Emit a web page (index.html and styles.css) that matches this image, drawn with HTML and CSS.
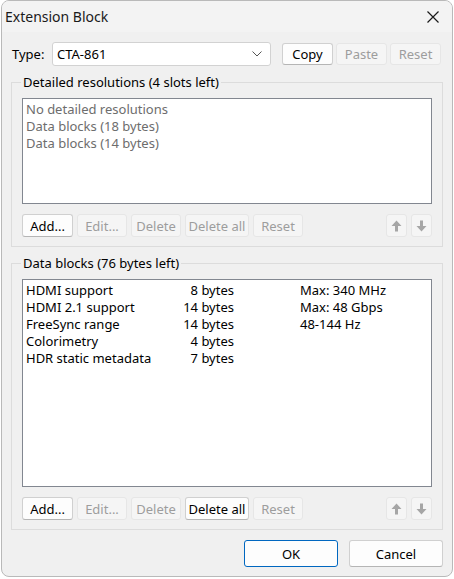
FILE: index.html
```html
<!DOCTYPE html>
<html>
<head>
<meta charset="utf-8">
<link rel="stylesheet" href="styles.css">
</head>
<body>
<div class="window">
  <div class="titlebar">
    <span class="title">Extension Block</span>
    <svg class="close" width="14" height="14" viewBox="0 0 14 14"><path d="M1.5 1.5 L12.5 12.5 M12.5 1.5 L1.5 12.5" stroke="#1a1a1a" stroke-width="1.2" fill="none"/></svg>
  </div>
  <div class="content">
    <div class="type-row">
      <span class="label">Type:</span>
      <div class="combo">
        <span>CTA-861</span>
        <svg width="10" height="6" viewBox="0 0 10 6"><path d="M0.5 0.5 L5 5 L9.5 0.5" stroke="#555" stroke-width="1" fill="none"/></svg>
      </div>
      <div class="btns-top">
        <button class="btn">Copy</button>
        <button class="btn dis">Paste</button>
        <button class="btn dis">Reset</button>
      </div>
    </div>

    <fieldset class="group g1">
      <legend>Detailed resolutions (4 slots left)</legend>
      <div class="listbox lb1 grayed">
        <div class="row">No detailed resolutions</div>
        <div class="row">Data blocks (18 bytes)</div>
        <div class="row">Data blocks (14 bytes)</div>
      </div>
      <div class="btnrow">
        <button class="btn w51">Add...</button>
        <button class="btn dis w50">Edit...</button>
        <button class="btn dis w50">Delete</button>
        <button class="btn dis w64">Delete all</button>
        <button class="btn dis w50">Reset</button>
        <span class="spacer"></span>
        <button class="btn dis arrow"><svg width="11" height="12" viewBox="0 0 11 12"><path d="M5.5 0.5 L10.5 6 L7 6 L7 11.5 L4 11.5 L4 6 L0.5 6 Z" fill="#a6a6a6"/></svg></button>
        <button class="btn dis arrow"><svg width="11" height="12" viewBox="0 0 11 12"><path d="M5.5 11.5 L10.5 6 L7 6 L7 0.5 L4 0.5 L4 6 L0.5 6 Z" fill="#a6a6a6"/></svg></button>
      </div>
    </fieldset>

    <fieldset class="group g2">
      <legend>Data blocks (76 bytes left)</legend>
      <div class="listbox lb2">
        <div class="drow"><span>HDMI support</span><span class="sz">8 bytes</span><span class="info">Max: 340 MHz</span></div>
        <div class="drow"><span>HDMI 2.1 support</span><span class="sz">14 bytes</span><span class="info">Max: 48 Gbps</span></div>
        <div class="drow"><span>FreeSync range</span><span class="sz">14 bytes</span><span class="info">48-144 Hz</span></div>
        <div class="drow"><span>Colorimetry</span><span class="sz">4 bytes</span><span class="info"></span></div>
        <div class="drow"><span>HDR static metadata</span><span class="sz">7 bytes</span><span class="info"></span></div>
      </div>
      <div class="btnrow">
        <button class="btn w51">Add...</button>
        <button class="btn dis w50">Edit...</button>
        <button class="btn dis w50">Delete</button>
        <button class="btn w64">Delete all</button>
        <button class="btn dis w50">Reset</button>
        <span class="spacer"></span>
        <button class="btn dis arrow"><svg width="11" height="12" viewBox="0 0 11 12"><path d="M5.5 0.5 L10.5 6 L7 6 L7 11.5 L4 11.5 L4 6 L0.5 6 Z" fill="#a6a6a6"/></svg></button>
        <button class="btn dis arrow"><svg width="11" height="12" viewBox="0 0 11 12"><path d="M5.5 11.5 L10.5 6 L7 6 L7 0.5 L4 0.5 L4 6 L0.5 6 Z" fill="#a6a6a6"/></svg></button>
      </div>
    </fieldset>

    <div class="footer">
      <button class="btn big default">OK</button>
      <button class="btn big">Cancel</button>
    </div>
  </div>
</div>
</body>
</html>
```

FILE: styles.css
```css
* { box-sizing: border-box; }
html, body { margin: 0; padding: 0; background: #ffffff; }
body {
  font-family: "Noto Sans", "Open Sans", sans-serif;
  font-size: 13px;
  color: #000;
}
.window {
  width: 452px;
  height: 577px;
  margin-left: 1px;
  background: #f0f0f0;
  border: 1px solid #b9b9b9;
  border-radius: 8px;
  overflow: hidden;
  display: flex;
  flex-direction: column;
}
.titlebar {
  height: 31px;
  flex: none;
  display: flex;
  align-items: center;
  justify-content: space-between;
  padding: 0 12px 0 3px;
  background: #f3f3f3;
}
.title { font-size: 14px; color: #1a1a1a; }
.close { display: block; }
.content {
  padding: 0 9px 0 9px;
  display: flex;
  flex-direction: column;
}
.type-row {
  margin-top: 10px;
  height: 24px;
  display: flex;
  align-items: center;
}
.label { width: 41px; padding-left: 1px; }
.combo {
  width: 219px;
  height: 24px;
  background: #fff;
  border: 1px solid #d2d2d2;
  border-radius: 3px;
  display: flex;
  align-items: center;
  justify-content: space-between;
  padding: 0 8px 0 4px;
}
.combo svg { display: block; }
.btns-top { display: flex; gap: 3px; margin-left: 11px; }
.btns-top .btn { width: 51px; height: 22px; }
.btn {
  font-family: inherit;
  font-size: 13px;
  height: 23px;
  padding: 0;
  background: #fdfdfd;
  border: 1px solid #d0d0d0;
  border-bottom-color: #b5b5b5;
  border-radius: 3px;
  color: #000;
  display: flex;
  align-items: center;
  justify-content: center;
}
.btn.dis {
  background: #f5f5f5;
  border-color: #e6e6e6;
  color: #9d9d9d;
}
.w51 { width: 51px; }
.w50 { width: 50px; }
.w64 { width: 64px; }
.arrow { width: 21px; }
.group {
  margin: 0;
  border: 1px solid #dcdcdc;
  padding: 8px 10px 9px 10px;
  min-width: 0;
}
.group legend {
  padding: 0 2px;
  margin-left: -1px;
  line-height: 16px;
  color: #000;
}
.g1 { margin-top: 8px; }
.g2 { margin-top: 8px; }
.listbox {
  background: #fff;
  border: 1px solid #828790;
  padding: 2px 3px;
  line-height: 17px;
}
.lb1 { height: 106px; }
.lb2 { height: 208px; }
.grayed { color: #6d6d6d; }
.btnrow {
  margin-top: 10px;
  display: flex;
  gap: 4px;
}
.spacer { flex: 1; }
.drow {
  display: grid;
  grid-template-columns: 150px 58px 1fr;
}
.drow .sz { text-align: right; }
.drow .info { padding-left: 66px; }
.footer {
  margin-top: 10px;
  display: flex;
  justify-content: flex-end;
  gap: 11px;
}
.btn.big { width: 94px; height: 27px; }
.btn.default { border: 1px solid #0067c0; }
```
